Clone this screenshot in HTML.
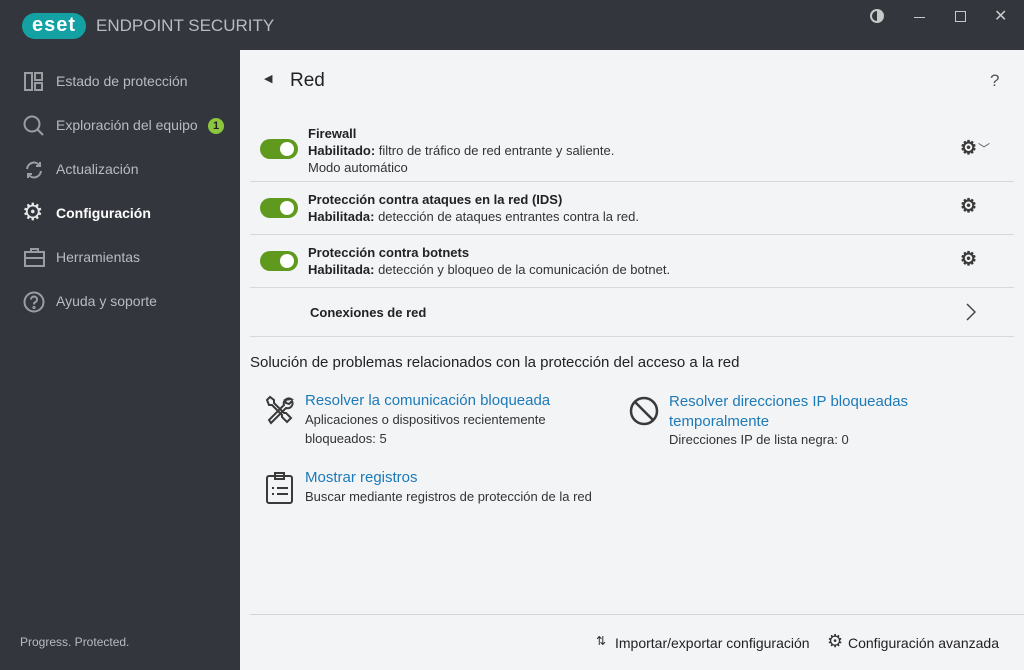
<!DOCTYPE html>
<html><head><meta charset="utf-8"><style>
*{margin:0;padding:0;box-sizing:border-box}
body{width:1024px;height:670px;background:#33373d;font-family:"Liberation Sans",sans-serif;position:relative;overflow:hidden;color:#2b2b2b}
.a{position:absolute}
.nav{color:#b8bcc1;font-size:14px}
.nav div{position:absolute;left:56px}
.main{left:240px;top:50px;width:784px;height:620px;background:#f3f4f6}
.row{position:absolute;left:10px;width:764px;border-bottom:1px solid #d6d8db}
.tg{position:absolute;left:10px;width:38px;height:20px;border-radius:10px;background:#5f9a1e}
.tg:after{content:"";position:absolute;right:4px;top:3px;width:14px;height:14px;border-radius:50%;background:#fff}
.t{position:absolute;left:58px;font-size:13px;line-height:17px;color:#333}
.t b{color:#222}
.gear{position:absolute;font-size:19px;color:#3a3a3a;font-weight:bold}
.lk{color:#1d7ab8;font-size:15px}
.sm{font-size:13px;color:#333;line-height:19px}
</style></head><body>
<div class="a" style="left:22px;top:13px;width:64px;height:26px;border-radius:13px;background:#13a1a4;color:#fff;font-weight:bold;font-size:20px;line-height:25px;text-align:center;letter-spacing:1px">eset</div>
<div class="a" style="left:96px;top:16px;color:#b8bcc1;font-size:17px">ENDPOINT SECURITY</div>
<div class="a" style="left:870px;top:9px;width:14px;height:14px;border:2px solid #c8c8c8;border-radius:50%;background:linear-gradient(90deg,transparent 50%,#c8c8c8 50%)"></div>
<div class="a" style="left:914px;top:17px;width:11px;height:1px;background:#c8c8c8"></div>
<div class="a" style="left:955px;top:11px;width:11px;height:11px;border:1px solid #c8c8c8"></div>
<div class="a" style="left:994px;top:6px;color:#c8c8c8;font-size:16px">✕</div>
<div class="nav">
<svg class="a" style="left:24px;top:72px" width="19" height="19" fill="none" stroke="#9a9ea3" stroke-width="2"><rect x="1" y="1" width="7" height="17"/><rect x="11" y="1" width="7" height="7"/><rect x="11" y="11" width="7" height="7"/></svg>
<div style="top:73px">Estado de protección</div>
<svg class="a" style="left:23px;top:115px" width="22" height="22" fill="none" stroke="#9a9ea3" stroke-width="2"><circle cx="9" cy="9" r="7.5"/><path d="M14 14l6 6"/></svg>
<div style="top:117px">Exploración del equipo</div>
<div class="a" style="left:208px;top:118px;width:16px;height:16px;border-radius:50%;background:#8cc63f;color:#222;font-size:11px;text-align:center;line-height:16px;font-weight:bold">1</div>
<svg class="a" style="left:24px;top:160px" width="20" height="20" fill="none" stroke="#9a9ea3" stroke-width="2"><path d="M3 9a7 7 0 0 1 13-3M17 11a7 7 0 0 1-13 3"/><path d="M16 2v4h-4M4 18v-4h4"/></svg>
<div style="top:161px">Actualización</div>
<div class="a" style="left:22px;top:200px;font-size:24px;color:#e8e8e8;line-height:26px">⚙</div>
<div style="top:205px;color:#fff;font-weight:bold">Configuración</div>
<svg class="a" style="left:24px;top:248px" width="21" height="19" fill="none" stroke="#9a9ea3" stroke-width="2"><rect x="1" y="4" width="19" height="14"/><path d="M7 4V1h7v3M1 10h19"/></svg>
<div style="top:249px">Herramientas</div>
<svg class="a" style="left:23px;top:291px" width="22" height="22" fill="none" stroke="#9a9ea3" stroke-width="2"><circle cx="11" cy="11" r="9.5"/><path d="M8 8.5a3 3 0 1 1 4 2.8c-1 .5-1 1-1 2.2"/><circle cx="11" cy="16.5" r=".6"/></svg>
<div style="top:293px">Ayuda y soporte</div>
<div style="left:20px;top:635px;font-size:12px;color:#b8bcc1">Progress. Protected.</div>
</div>
<div class="a main">
<div class="a" style="left:24px;top:22px;font-size:11px;color:#333">◀</div>
<div class="a" style="left:50px;top:20px;font-size:19px;color:#222">Red</div>
<div class="a" style="left:750px;top:21px;font-size:17px;color:#555">?</div>
<div class="row" style="top:75px;height:57px"><div class="tg" style="top:14px"></div><div class="t" style="top:0"><b>Firewall</b><br><b>Habilitado:</b> filtro de tráfico de red entrante y saliente.<br>Modo automático</div><div class="gear" style="left:710px;top:12px">⚙</div><div class="a" style="left:728px;top:15px;font-size:12px;color:#555">﹀</div></div>
<div class="row" style="top:132px;height:53px"><div class="tg" style="top:16px"></div><div class="t" style="top:9px"><b>Protección contra ataques en la red (IDS)</b><br><b>Habilitada:</b> detección de ataques entrantes contra la red.</div><div class="gear" style="left:710px;top:13px">⚙</div></div>
<div class="row" style="top:185px;height:53px"><div class="tg" style="top:16px"></div><div class="t" style="top:9px"><b>Protección contra botnets</b><br><b>Habilitada:</b> detección y bloqueo de la comunicación de botnet.</div><div class="gear" style="left:710px;top:13px">⚙</div></div>
<div class="row" style="top:238px;height:49px"><div class="t" style="top:16px;left:60px"><b>Conexiones de red</b></div><svg class="a" style="left:716px;top:15px" width="10" height="18" fill="none" stroke="#444" stroke-width="1.5"><path d="M1 1l8 8-8 8"/></svg></div>
<div class="a" style="left:10px;top:304px;font-size:15px;color:#222">Solución de problemas relacionados con la protección del acceso a la red</div>
<svg class="a" style="left:24px;top:345px" width="32" height="32" fill="none" stroke="#3a3a3a" stroke-width="2"><path d="M3 5l3-3 4 3v3l10 10 2 0 5 5-4 4-5-5v-2L8 10H5z"/><path d="M27 4a5 5 0 0 0-7 6L5 25l2 3 15-15a5 5 0 0 0 6-7l-3 3-3-1-1-3z"/></svg>
<div class="a lk" style="left:65px;top:342px">Resolver la comunicación bloqueada</div>
<div class="a sm" style="left:65px;top:360px">Aplicaciones o dispositivos recientemente<br>bloqueados: 5</div>
<svg class="a" style="left:388px;top:345px" width="32" height="32" fill="none" stroke="#3a3a3a" stroke-width="2.5"><circle cx="16" cy="16" r="13"/><path d="M7 7l18 18"/></svg>
<div class="a lk" style="left:429px;top:342px;line-height:20px">Resolver direcciones IP bloqueadas<br>temporalmente</div>
<div class="a sm" style="left:429px;top:380px">Direcciones IP de lista negra: 0</div>
<svg class="a" style="left:24px;top:421px" width="32" height="34" fill="none" stroke="#3a3a3a" stroke-width="2"><rect x="3" y="5" width="25" height="27" rx="2"/><path d="M11 5V2h9v3M11 5v3h9V5M8 17h2M13 17h11M8 23h2M13 23h11"/></svg>
<div class="a lk" style="left:65px;top:419px">Mostrar registros</div>
<div class="a sm" style="left:65px;top:437px">Buscar mediante registros de protección de la red</div>
<div class="a" style="left:10px;top:564px;width:774px;height:1px;background:#d3d5d8"></div>
<div class="a" style="left:356px;top:584px;font-size:12px;color:#333">⇅</div>
<div class="a" style="left:375px;top:585px;font-size:14px;color:#222">Importar/exportar configuración</div>
<div class="a" style="left:587px;top:581px;font-size:18px;color:#333">⚙</div>
<div class="a" style="left:608px;top:585px;font-size:14px;color:#222">Configuración avanzada</div>
</div>
</body></html>
